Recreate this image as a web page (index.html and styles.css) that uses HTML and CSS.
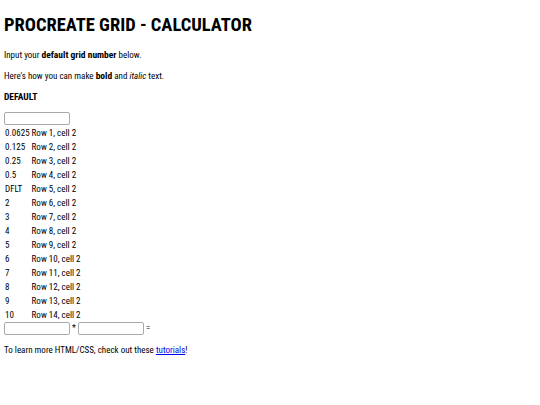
FILE: index.html
```html
<!DOCTYPE html>
<html lang="en">
  <head>
    <title>Procreate Grid - Calculator</title>
    <meta charset="UTF-8">
    <link rel="stylesheet" href="styles.css">
  </head>
  <body>
    <h1>PROCREATE GRID - CALCULATOR</h1>
    <p>Input your <b>default grid number</b> below.</p>
    <p>Here's how you can make <b>bold</b> and <i>italic</i> text.</p>
    <h4>DEFAULT</h4>
    <input type="text" class="field">
    <table class="grid">
      <tr><td>0.0625</td><td>Row 1, cell 2</td></tr>
      <tr><td>0.125</td><td>Row 2, cell 2</td></tr>
      <tr><td>0.25</td><td>Row 3, cell 2</td></tr>
      <tr><td>0.5</td><td>Row 4, cell 2</td></tr>
      <tr><td>DFLT</td><td>Row 5, cell 2</td></tr>
      <tr><td>2</td><td>Row 6, cell 2</td></tr>
      <tr><td>3</td><td>Row 7, cell 2</td></tr>
      <tr><td>4</td><td>Row 8, cell 2</td></tr>
      <tr><td>5</td><td>Row 9, cell 2</td></tr>
      <tr><td>6</td><td>Row 10, cell 2</td></tr>
      <tr><td>7</td><td>Row 11, cell 2</td></tr>
      <tr><td>8</td><td>Row 12, cell 2</td></tr>
      <tr><td>9</td><td>Row 13, cell 2</td></tr>
      <tr><td>10</td><td>Row 14, cell 2</td></tr>
    </table>
    <div class="calc">
      <input type="text" class="field"> * <input type="text" class="field"> =
    </div>
    <p>To learn more HTML/CSS, check out these <a href="#">tutorials</a>!</p>
  </body>
</html>
```
FILE: styles.css
```css
body{
    margin: 4px;
    font-family: "Roboto Condensed", "DejaVu Sans", sans-serif;
    font-size: 9px;
    line-height: 12px;
    color: #000;
    background: #fff;
}
h1{
    font-size: 18.5px;
    line-height: 22px;
    margin: 10px 0 13px;
}
p{
    margin: 9px 0;
}
b{
    font-size: 9.5px;
}
h4{
    font-size: 9.5px;
    margin: 9px 0;
}
.field{
    width: 66px;
    height: 13px;
    padding: 0;
    border: 1px solid #aaa;
    border-radius: 2px;
    font-size: 9px;
    box-sizing: border-box;
    vertical-align: middle;
}
.grid{
    border-spacing: 0;
    margin-top: 1px;
}
.grid td{
    padding: 1px 1px;
    height: 12px;
}
.calc{
    margin-top: 0;
}
a{
    color: #00e;
}
```
